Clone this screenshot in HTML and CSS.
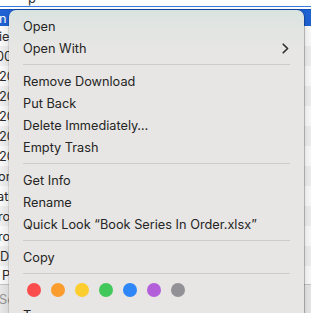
FILE: index.html
```html
<!DOCTYPE html>
<html>
<head>
<meta charset="utf-8">
<link rel="stylesheet" href="styles.css">
</head>
<body>
<div class="win">
  <div class="topbar"><span class="cut">p</span></div>
  <div class="focus"></div>
  <div class="gap"></div>
  <div class="list">
    <div class="row sel"><span class="t0">n</span></div>
    <div class="row"><span class="t1">ie</span></div>
    <div class="row alt"><span class="t2">00</span></div>
    <div class="row"><span class="t3">20</span></div>
    <div class="row alt"><span class="t3">20</span></div>
    <div class="row"><span class="t3">20</span></div>
    <div class="row alt"><span class="t3">20</span></div>
    <div class="row"><span class="t3">20</span></div>
    <div class="row alt"><span class="t4">or</span></div>
    <div class="row"><span class="t5">ati</span></div>
    <div class="row alt"><span class="t4">ro</span></div>
    <div class="row"><span class="t4">ro</span></div>
    <div class="row alt"><span class="t6">D</span></div>
    <div class="row last"><span class="t7">P</span></div>
  </div>
  <div class="footer"><span>Se</span></div>

  <div class="menu">
    <div class="item">Open</div>
    <div class="item">Open With
      <svg class="chev" width="7" height="11" viewBox="0 0 7 11"><path d="M1.2 1.2 L5.6 5.5 L1.2 9.8" fill="none" stroke="#2b2b2b" stroke-width="1.6" stroke-linecap="round" stroke-linejoin="round"/></svg>
    </div>
    <div class="sep"></div>
    <div class="item">Remove Download</div>
    <div class="item">Put Back</div>
    <div class="item">Delete Immediately…</div>
    <div class="item">Empty Trash</div>
    <div class="sep"></div>
    <div class="item">Get Info</div>
    <div class="item">Rename</div>
    <div class="item">Quick Look “Book Series In Order.xlsx”</div>
    <div class="sep"></div>
    <div class="item">Copy</div>
    <div class="sep"></div>
    <div class="dots">
      <span class="dot red"></span>
      <span class="dot orange"></span>
      <span class="dot yellow"></span>
      <span class="dot green"></span>
      <span class="dot blue"></span>
      <span class="dot purple"></span>
      <span class="dot gray"></span>
    </div>
    <div class="item">Tags…</div>
  </div>
</div>
</body>
</html>
```
FILE: styles.css
```css
html, body {
  margin: 0;
  padding: 0;
  background: #ffffff;
  overflow: hidden;
}
.win {
  position: relative;
  width: 311px;
  height: 313px;
  overflow: hidden;
  font-family: Inter, "Liberation Sans", sans-serif;
  font-size: 12.75px;
  color: #242424;
}
.topbar {
  height: 6px;
  position: relative;
  overflow: hidden;
  background: #ffffff;
}
.cut {
  position: absolute;
  left: 28px;
  top: -10px;
  font-size: 13px;
  color: #333;
}
.focus {
  height: 1px;
  background: #3b7be6;
}
.gap {
  height: 2px;
  background: #ffffff;
}
.list {
  display: flex;
  flex-direction: column;
}
.row {
  height: 20px;
  display: flex;
  align-items: center;
  background: #ffffff;
  white-space: nowrap;
  overflow: hidden;
  color: #2a2a2a;
}
.row.alt {
  background: #f4f4f5;
}
.row.sel {
  height: 17px;
  background: #1f63d6;
  color: #ffffff;
  border-top: 1px solid #124fb8;
  box-sizing: border-box;
}
.row.last {
  height: 18px;
}
.t0 { margin-left: -1px; }
.t1 { margin-left: -1px; }
.t2 { margin-left: -4px; }
.t3 { margin-left: -1px; }
.t4 { margin-left: -2px; }
.t5 { margin-left: -3px; }
.t6 { margin-left: 0px; }
.t7 { margin-left: 2px; }
.footer {
  height: 30px;
  border-top: 1px solid #c9c9c9;
  background: #ececec;
  display: flex;
  align-items: center;
  color: #9a9a9a;
}
.footer span {
  margin-left: -1px;
  margin-top: -2px;
}

.menu {
  position: absolute;
  left: 9px;
  top: 10px;
  width: 295px;
  height: 340px;
  box-sizing: border-box;
  padding: 5px 0;
  border-radius: 7px;
  background: linear-gradient(180deg, #dae3e0 0px, #e3e5e3 22px, #e7e6e4 42px, #e7e6e4 100%);
  box-shadow: 0 0 0 0.5px rgba(0,0,0,0.18), 1px 0 1px rgba(0,0,0,0.18), 0 6px 16px rgba(0,0,0,0.18);
  display: flex;
  flex-direction: column;
}
.item {
  height: 22px;
  flex: none;
  padding: 0 15px 0 14px;
  display: flex;
  align-items: center;
  justify-content: space-between;
  white-space: nowrap;
  color: #252525;
}
.chev {
  display: block;
}
.sep {
  flex: none;
  height: 1px;
  margin: 5px 14px;
  background: #cdcccb;
}
.dots {
  flex: none;
  height: 22px;
  padding-left: 18px;
  margin-bottom: 3px;
  display: flex;
  align-items: center;
  gap: 10px;
}
.dot {
  width: 14px;
  height: 14px;
  border-radius: 50%;
  display: block;
}
.red { background: #fc4d4d; }
.orange { background: #fb9c2f; }
.yellow { background: #fccd2e; }
.green { background: #41c85a; }
.blue { background: #2f86f7; }
.purple { background: #b35fda; }
.gray { background: #929296; }
```
